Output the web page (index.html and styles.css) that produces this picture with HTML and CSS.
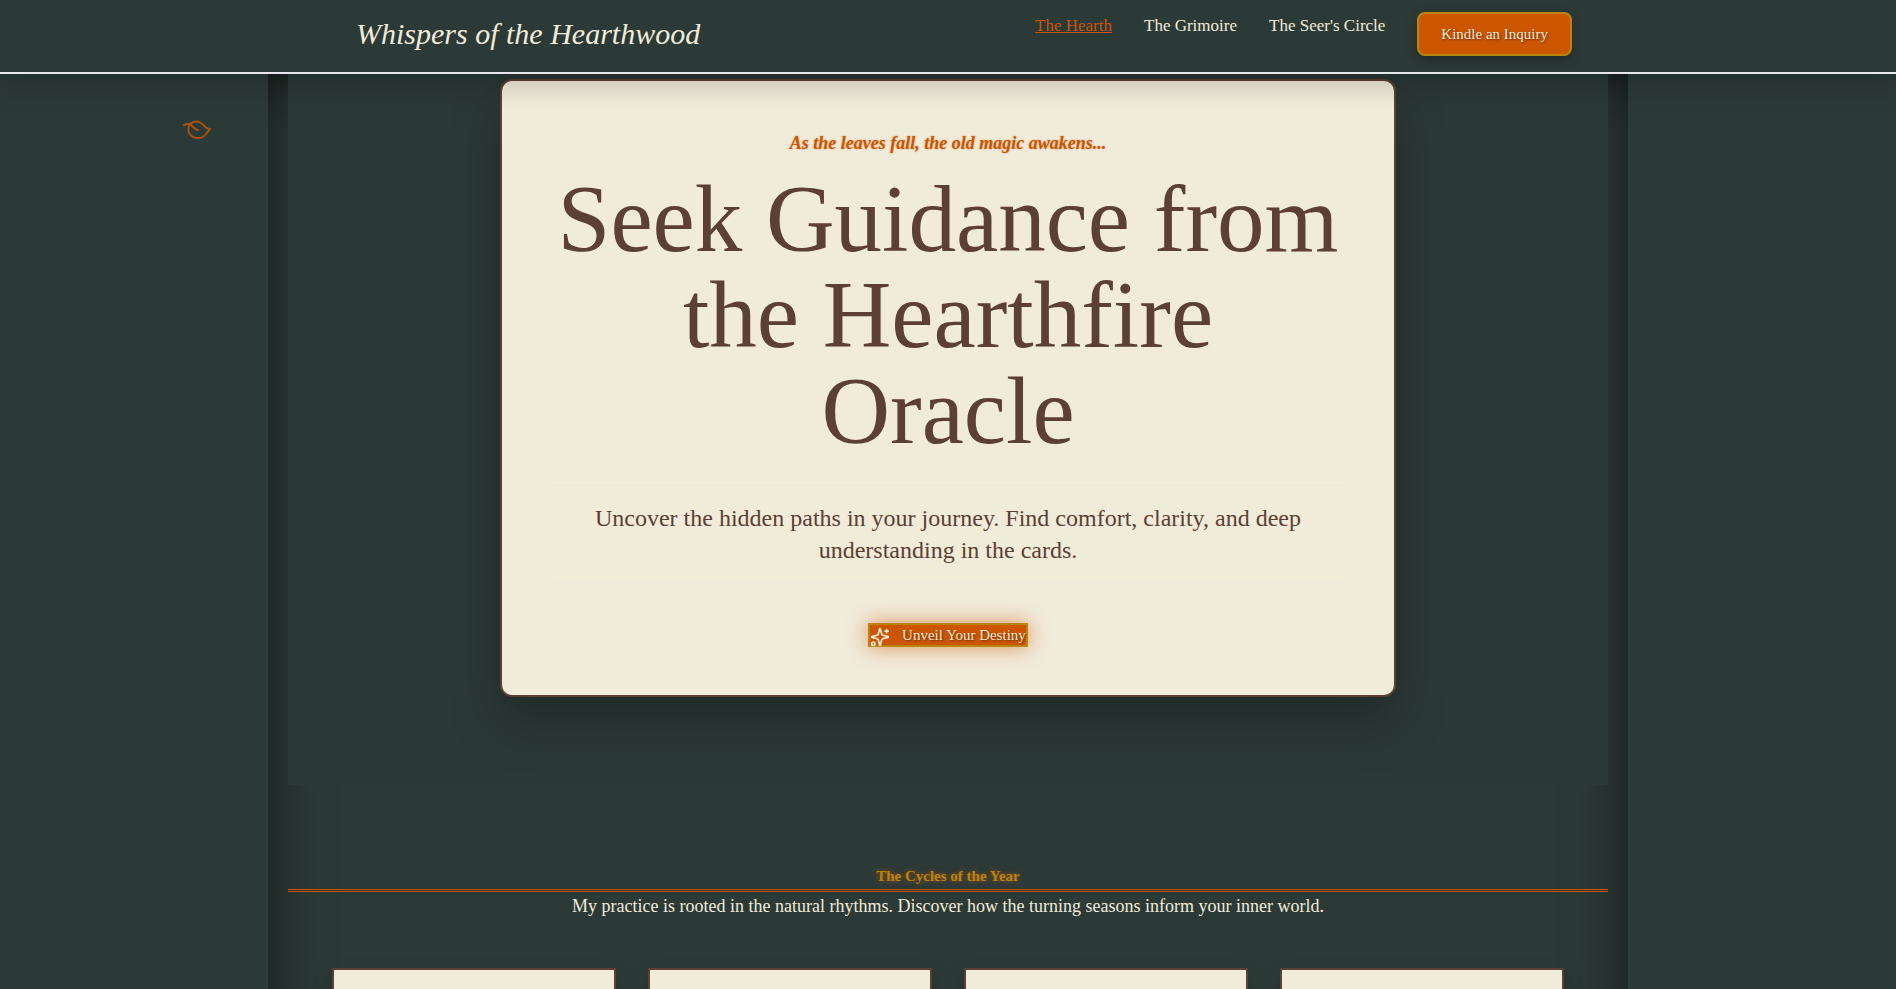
FILE: index.html
```html
<!DOCTYPE html>
<html lang="en">
<head>
    <meta charset="UTF-8">
    <meta name="viewport" content="width=device-width, initial-scale=1.0">
    <title>Whispers of the Hearthwood</title>
    <link rel="stylesheet" href="styles.css">
</head>
<body>
    <header class="site-header">
        <div class="header-inner">
            <a class="logo" href="#">Whispers of the Hearthwood</a>
            <nav class="nav">
                <a class="nav-link active" href="#hearth">The Hearth</a>
                <a class="nav-link" href="#grimoire">The Grimoire</a>
                <a class="nav-link" href="#circle">The Seer's Circle</a>
                <button class="btn-inquiry" type="button">Kindle an Inquiry</button>
            </nav>
        </div>
    </header>

    <!-- drifting leaf -->
    <svg class="leaf" viewBox="0 0 28 20" fill="none" stroke="currentColor" stroke-width="2" stroke-linecap="round" stroke-linejoin="round">
        <path d="M6 6C7 2 14 0 18 3c3 2 5 6 9 6-3 3-5 9-11 9C7 18 4 12 6 6Z"/>
        <path d="M1 5c4-2 7-1 9 2 2 2 3 3 5 3"/>
    </svg>

    <main class="page">
        <section class="hero" id="hearth">
            <div class="hero-card">
                <p class="tagline">As the leaves fall, the old magic awakens...</p>
                <h1 class="hero-title">Seek Guidance from the Hearthfire Oracle</h1>
                <p class="hero-text">Uncover the hidden paths in your journey. Find comfort, clarity, and deep understanding in the cards.</p>
                <button class="btn-destiny" type="button">
                    <svg class="sparkles" viewBox="0 0 24 24" fill="none" stroke="currentColor" stroke-width="2" stroke-linecap="round" stroke-linejoin="round">
                        <path d="M9.937 15.5A2 2 0 0 0 8.5 14.063l-6.135-1.582a.5.5 0 0 1 0-.962L8.5 9.936A2 2 0 0 0 9.937 8.5l1.582-6.135a.5.5 0 0 1 .963 0L14.063 8.5A2 2 0 0 0 15.5 9.937l6.135 1.581a.5.5 0 0 1 0 .964L15.5 14.063a2 2 0 0 0-1.437 1.437l-1.582 6.135a.5.5 0 0 1-.963 0z"/>
                        <path d="M20 3v4M22 5h-4"/>
                        <circle cx="4" cy="20" r="2"/>
                    </svg>
                    Unveil Your Destiny
                </button>
            </div>
        </section>

        <section class="cycles">
            <h2 class="cycles-title">The Cycles of the Year</h2>
            <p class="cycles-text">My practice is rooted in the natural rhythms. Discover how the turning seasons inform your inner world.</p>
            <div class="season-grid">
                <article class="season-card"></article>
                <article class="season-card"></article>
                <article class="season-card"></article>
                <article class="season-card"></article>
            </div>
        </section>
    </main>
</body>
</html>
```
FILE: styles.css
```css
* {
    box-sizing: border-box;
}
body {
    margin: 0;
    height: 100vh;
    overflow: hidden;
    background-color: #2c3a37;
    color: #f1ebda;
    font-family: "Liberation Serif", "Times New Roman", serif;
}
h1, h2, p {
    margin: 0;
}
button {
    font-family: inherit;
    font-size: 15px;
    color: #f1ebda;
    background-color: #cc5500;
    border: 2px solid #b8860b;
    text-shadow: 1px 1px 2px rgba(0, 0, 0, 0.5);
    cursor: pointer;
}

/* header */
.site-header {
    position: relative;
    z-index: 10;
    background-color: #2c3a37;
    border-bottom: 2px solid #e5e7eb;
    box-shadow: 0 10px 30px rgba(0, 0, 0, 0.2);
}
.header-inner {
    max-width: 1280px;
    height: 72px;
    margin: 0 auto;
    padding: 12px 16px;
    display: flex;
    justify-content: space-between;
}
.logo {
    padding-left: 32px;
    color: #f1ebda;
    font-size: 30px;
    font-style: italic;
    line-height: 44px;
    text-decoration: none;
}
.nav {
    display: flex;
    align-items: flex-start;
    gap: 32px;
}
.nav-link {
    color: #f1ebda;
    font-size: 17px;
    line-height: 28px;
    text-decoration: none;
}
.nav-link.active {
    color: #cc5500;
    text-decoration: underline;
}
.btn-inquiry {
    height: 44px;
    padding: 0 22px;
    border-radius: 8px;
    box-shadow: 0 4px 12px rgba(0, 0, 0, 0.3);
}

.leaf {
    position: absolute;
    left: 183px;
    top: 120px;
    width: 28px;
    height: 20px;
    color: #cc5500;
    opacity: 0.8;
}

/* page column */
.page {
    max-width: 1360px;
    margin: 0 auto;
    padding: 0 20px 80px;
    box-shadow: inset 0 0 60px rgba(0, 0, 0, 0.6);
}
.hero {
    padding: 5px 0 88px;
    background-color: #2b3936;
}
.hero-card {
    max-width: 896px;
    margin: 0 auto;
    padding: 48px;
    text-align: center;
    color: #5c4033;
    background-color: #f1ebda;
    border: 2px solid #5c4033;
    border-radius: 12px;
    box-shadow: 0 25px 50px rgba(0, 0, 0, 0.25);
}
.tagline {
    color: #cc5500;
    font-size: 18px;
    font-weight: bold;
    font-style: italic;
    line-height: 28px;
    text-shadow: 0 0 2px rgba(204, 85, 0, 0.5);
}
.hero-title {
    margin: 14px 0 26px;
    font-size: 95px;
    font-weight: normal;
    line-height: 96px;
}
.hero-text {
    padding: 16px 0;
    border-top: 1px solid #ebe8de;
    border-bottom: 1px solid #ebe8de;
    font-size: 24px;
    line-height: 32px;
}
.btn-destiny {
    display: flex;
    align-items: center;
    gap: 12px;
    width: max-content;
    height: 24px;
    margin: 40px auto 0;
    padding: 0;
    box-shadow: 0 0 20px rgba(204, 85, 0, 0.6);
}
.sparkles {
    width: 20px;
    height: 20px;
    margin-top: 4px;
}

/* seasons */
.cycles {
    padding-top: 80px;
    text-align: center;
}
.cycles-title {
    padding-bottom: 2px;
    border-bottom: 3px double #cc5500;
    color: #b8860b;
    font-size: 15px;
    line-height: 22px;
    text-shadow: 0 0 5px rgba(204, 85, 0, 0.8);
}
.cycles-text {
    font-size: 18px;
    line-height: 28px;
}
.season-grid {
    display: grid;
    grid-template-columns: repeat(4, 1fr);
    gap: 32px;
    max-width: 1280px;
    margin: 0 auto;
    padding: 48px 24px 0;
}
.season-card {
    min-height: 320px;
    background-color: #f1ebda;
    border: 2px solid #5c4033;
    box-shadow: 0 10px 20px rgba(0, 0, 0, 0.2);
}
```
